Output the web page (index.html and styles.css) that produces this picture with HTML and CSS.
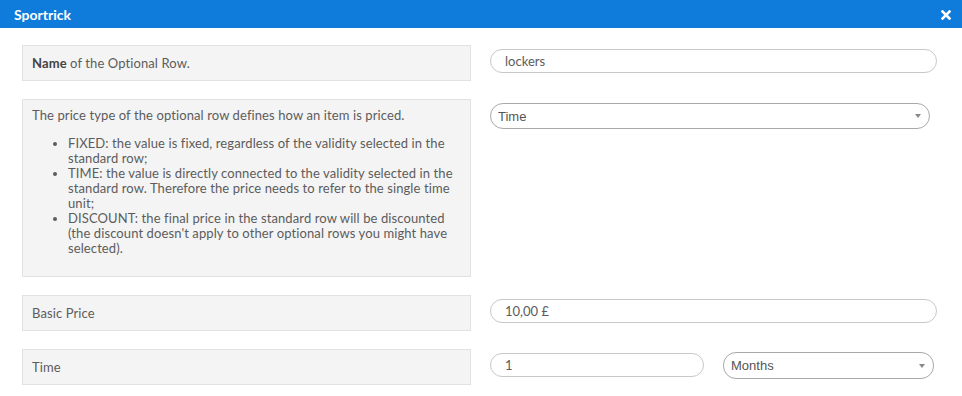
FILE: index.html
```html
<!DOCTYPE html>
<html lang="en">
<head>
    <meta charset="UTF-8">
    <meta name="viewport" content="width=device-width, initial-scale=1.0">
    <title>Sportrick</title>
    <link rel="stylesheet" href="styles.css">
</head>
<body>
    <div class="modal">
        <div class="modal-header">
            <span class="modal-title">Sportrick</span>
            <svg class="modal-close" width="10" height="10" viewBox="0 0 10 10">
                <path d="M1.5 1.5 L8.5 8.5 M8.5 1.5 L1.5 8.5" stroke="#fff" stroke-width="2.6" stroke-linecap="square"/>
            </svg>
        </div>

        <div class="modal-body">
            <div class="form-row">
                <div class="label-box"><b>Name</b> of the Optional Row.</div>
                <div class="field">
                    <input class="pill" type="text" value="lockers">
                </div>
            </div>

            <div class="form-row">
                <div class="label-box description">
                    <p>The price type of the optional row defines how an item is priced.</p>
                    <ul>
                        <li>FIXED: the value is fixed, regardless of the validity selected in the standard row;</li>
                        <li>TIME: the value is directly connected to the validity selected in the standard row. Therefore the price needs to refer to the single time unit;</li>
                        <li>DISCOUNT: the final price in the standard row will be discounted (the discount doesn't apply to other optional rows you might have selected).</li>
                    </ul>
                </div>
                <div class="field">
                    <div class="select-wrap type-select">
                        <select class="pill-select">
                            <option>Time</option>
                        </select>
                    </div>
                </div>
            </div>

            <div class="form-row">
                <div class="label-box">Basic Price</div>
                <div class="field">
                    <input class="pill" type="text" value="10,00 £">
                </div>
            </div>

            <div class="form-row">
                <div class="label-box">Time</div>
                <div class="field time-field">
                    <input class="pill time-input" type="text" value="1">
                    <div class="select-wrap unit-select">
                        <select class="pill-select">
                            <option>Months</option>
                        </select>
                    </div>
                </div>
            </div>
        </div>
    </div>
</body>
</html>
```

FILE: styles.css
```css
body {
    margin: 0;
    padding: 0;
    background: #fff;
    font-family: 'Lato', sans-serif;
    font-size: 13px;
    color: #5c5c5c;
}

.modal {
    width: 962px;
    height: 396px;
    overflow: hidden;
    background: #fff;
}

.modal-header {
    height: 28px;
    background: #0f7bda;
    display: flex;
    align-items: center;
    justify-content: space-between;
    padding: 0 11px 0 14px;
}

.modal-title {
    color: #fff;
    font-weight: bold;
    font-size: 14px;
}

.modal-close {
    display: block;
    margin-top: 2px;
}

.modal-body {
    padding: 17px 25px 0 22px;
    display: flex;
    flex-direction: column;
    gap: 18px;
}

.form-row {
    display: grid;
    grid-template-columns: 449px 1fr;
    column-gap: 19px;
    align-items: start;
}

.label-box {
    background: #f4f4f4;
    border: 1px solid #e2e2e2;
    padding: 9px 9px;
    line-height: 16px;
    letter-spacing: 0.1px;
}

.label-box b {
    color: #444;
}

.description {
    padding: 8px 9px;
    line-height: 15px;
}

.description p {
    margin: 0 0 13px;
}

.description ul {
    margin: 0 0 12px;
    padding-left: 36px;
}

.field {
    padding-top: 4px;
}

.pill {
    display: block;
    width: 100%;
    box-sizing: border-box;
    height: 24px;
    border: 1px solid #c8c8c8;
    border-radius: 12px;
    padding: 0 14px;
    font-family: 'Lato', sans-serif;
    font-size: 13px;
    color: #5c5c5c;
    background: #fff;
    outline: none;
}

.select-wrap {
    position: relative;
}

.select-wrap::after {
    content: '';
    position: absolute;
    right: 9px;
    top: 50%;
    margin-top: -2px;
    border-left: 3px solid transparent;
    border-right: 3px solid transparent;
    border-top: 4px solid #888;
}

.pill-select {
    display: block;
    width: 100%;
    height: 26px;
    appearance: none;
    -webkit-appearance: none;
    border: 1px solid #a8a8a8;
    border-radius: 13px;
    padding: 0 7px;
    font-family: 'Liberation Sans', Arial, sans-serif;
    font-size: 13px;
    color: #555;
    background: #fff;
    outline: none;
}

.type-select {
    margin-right: 7px;
}

.time-field {
    display: flex;
    gap: 19px;
    align-items: flex-start;
}

.time-input {
    width: 214px;
    flex: none;
}

.unit-select {
    width: 211px;
    margin-top: -1px;
}

.unit-select .pill-select {
    height: 27px;
}
```
